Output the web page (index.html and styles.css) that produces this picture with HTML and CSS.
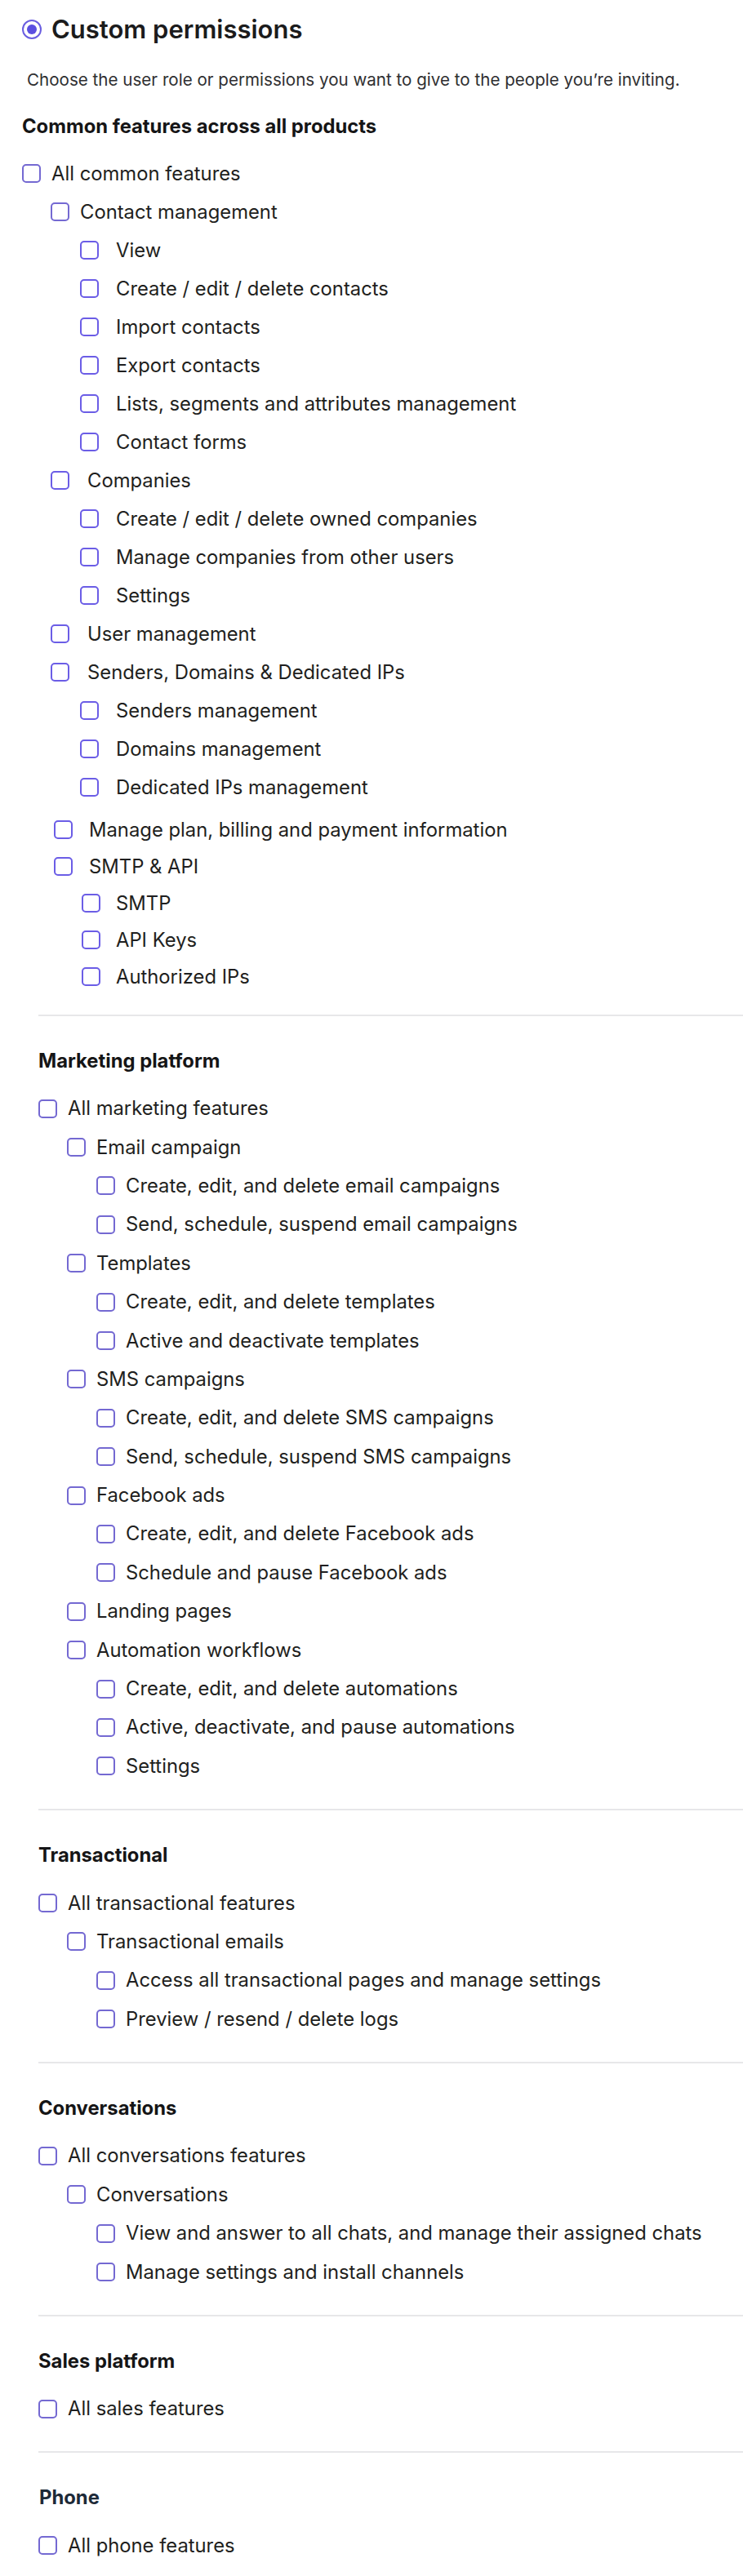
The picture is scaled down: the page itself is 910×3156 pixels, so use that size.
FILE: index.html
```html
<!DOCTYPE html>
<html lang="en">
<head>
<meta charset="utf-8">
<title>Custom permissions</title>
<link rel="stylesheet" href="styles.css">
</head>
<body>
<main class="page">
  <div class="title-row">
    <span class="radio"><span class="radio-dot"></span></span>
    <h1 class="title">Custom permissions</h1>
  </div>
  <p class="desc">Choose the user role or permissions you want to give to the people you’re inviting.</p>

  <section class="common">
    <h2 class="sec-title">Common features across all products</h2>
    <ul class="list">
      <li class="row"><span class="cb muted"></span><span class="lbl">All common features</span></li>
      <li class="row l1"><span class="cb muted"></span><span class="lbl">Contact management</span></li>
      <li class="row l2 wide"><span class="cb"></span><span class="lbl">View</span></li>
      <li class="row l2 wide"><span class="cb"></span><span class="lbl">Create / edit / delete contacts</span></li>
      <li class="row l2 wide"><span class="cb"></span><span class="lbl">Import contacts</span></li>
      <li class="row l2 wide"><span class="cb"></span><span class="lbl">Export contacts</span></li>
      <li class="row l2 wide"><span class="cb"></span><span class="lbl">Lists, segments and attributes management</span></li>
      <li class="row l2 wide"><span class="cb"></span><span class="lbl">Contact forms</span></li>
      <li class="row l1 wide"><span class="cb"></span><span class="lbl">Companies</span></li>
      <li class="row l2 wide"><span class="cb"></span><span class="lbl">Create / edit / delete owned companies</span></li>
      <li class="row l2 wide"><span class="cb"></span><span class="lbl">Manage companies from other users</span></li>
      <li class="row l2 wide"><span class="cb"></span><span class="lbl">Settings</span></li>
      <li class="row l1 wide"><span class="cb"></span><span class="lbl">User management</span></li>
      <li class="row l1 wide"><span class="cb"></span><span class="lbl">Senders, Domains &amp; Dedicated IPs</span></li>
      <li class="row l2 wide"><span class="cb"></span><span class="lbl">Senders management</span></li>
      <li class="row l2 wide"><span class="cb"></span><span class="lbl">Domains management</span></li>
      <li class="row l2 wide"><span class="cb"></span><span class="lbl">Dedicated IPs management</span></li>
    </ul>
    <ul class="list compact">
      <li class="row l1b"><span class="cb"></span><span class="lbl">Manage plan, billing and payment information</span></li>
      <li class="row l1b"><span class="cb"></span><span class="lbl">SMTP &amp; API</span></li>
      <li class="row l2b"><span class="cb"></span><span class="lbl">SMTP</span></li>
      <li class="row l2b"><span class="cb"></span><span class="lbl">API Keys</span></li>
      <li class="row l2b"><span class="cb"></span><span class="lbl">Authorized IPs</span></li>
    </ul>
  </section>

  <div class="products">
    <section class="product">
      <h2 class="sec-title">Marketing platform</h2>
      <ul class="list">
        <li class="row"><span class="cb muted"></span><span class="lbl">All marketing features</span></li>
        <li class="row l1"><span class="cb muted"></span><span class="lbl">Email campaign</span></li>
        <li class="row l2"><span class="cb muted"></span><span class="lbl">Create, edit, and delete email campaigns</span></li>
        <li class="row l2"><span class="cb muted"></span><span class="lbl">Send, schedule, suspend email campaigns</span></li>
        <li class="row l1"><span class="cb muted"></span><span class="lbl">Templates</span></li>
        <li class="row l2"><span class="cb muted"></span><span class="lbl">Create, edit, and delete templates</span></li>
        <li class="row l2"><span class="cb muted"></span><span class="lbl">Active and deactivate templates</span></li>
        <li class="row l1"><span class="cb muted"></span><span class="lbl">SMS campaigns</span></li>
        <li class="row l2"><span class="cb muted"></span><span class="lbl">Create, edit, and delete SMS campaigns</span></li>
        <li class="row l2"><span class="cb muted"></span><span class="lbl">Send, schedule, suspend SMS campaigns</span></li>
        <li class="row l1"><span class="cb muted"></span><span class="lbl">Facebook ads</span></li>
        <li class="row l2"><span class="cb muted"></span><span class="lbl">Create, edit, and delete Facebook ads</span></li>
        <li class="row l2"><span class="cb muted"></span><span class="lbl">Schedule and pause Facebook ads</span></li>
        <li class="row l1"><span class="cb muted"></span><span class="lbl">Landing pages</span></li>
        <li class="row l1"><span class="cb muted"></span><span class="lbl">Automation workflows</span></li>
        <li class="row l2"><span class="cb muted"></span><span class="lbl">Create, edit, and delete automations</span></li>
        <li class="row l2"><span class="cb muted"></span><span class="lbl">Active, deactivate, and pause automations</span></li>
        <li class="row l2"><span class="cb muted"></span><span class="lbl">Settings</span></li>
      </ul>
    </section>

    <section class="product">
      <h2 class="sec-title">Transactional</h2>
      <ul class="list">
        <li class="row"><span class="cb muted"></span><span class="lbl">All transactional features</span></li>
        <li class="row l1"><span class="cb muted"></span><span class="lbl">Transactional emails</span></li>
        <li class="row l2"><span class="cb muted"></span><span class="lbl">Access all transactional pages and manage settings</span></li>
        <li class="row l2"><span class="cb muted"></span><span class="lbl">Preview / resend / delete logs</span></li>
      </ul>
    </section>

    <section class="product">
      <h2 class="sec-title">Conversations</h2>
      <ul class="list">
        <li class="row"><span class="cb muted"></span><span class="lbl">All conversations features</span></li>
        <li class="row l1"><span class="cb muted"></span><span class="lbl">Conversations</span></li>
        <li class="row l2"><span class="cb muted"></span><span class="lbl">View and answer to all chats, and manage their assigned chats</span></li>
        <li class="row l2"><span class="cb muted"></span><span class="lbl">Manage settings and install channels</span></li>
      </ul>
    </section>

    <section class="product">
      <h2 class="sec-title">Sales platform</h2>
      <ul class="list">
        <li class="row"><span class="cb muted"></span><span class="lbl">All sales features</span></li>
      </ul>
    </section>

    <section class="product">
      <h2 class="sec-title phone">Phone</h2>
      <ul class="list">
        <li class="row"><span class="cb muted"></span><span class="lbl">All phone features</span></li>
      </ul>
    </section>
  </div>
</main>
</body>
</html>
```
FILE: styles.css
```css
* { box-sizing: border-box; }

html, body {
  margin: 0;
  padding: 0;
  background: #ffffff;
}

body {
  font-family: Inter, "Noto Sans", "Liberation Sans", sans-serif;
  color: #1f1f20;
}

.page {
  padding-left: 27px;
}

.title-row {
  display: flex;
  align-items: center;
  height: 71px;
  gap: 12px;
}

.radio {
  width: 24px;
  height: 24px;
  border-radius: 50%;
  border: 2px solid #6a5ee0;
  display: flex;
  align-items: center;
  justify-content: center;
  flex: none;
}

.radio-dot {
  width: 12px;
  height: 12px;
  border-radius: 50%;
  background: #5b4fe0;
}

.title {
  margin: 0;
  font-size: 31px;
  line-height: 36px;
  font-weight: 600;
  color: #1b1b1c;
  letter-spacing: 0;
}

.desc {
  margin: 13px 0 0 6px;
  font-size: 20.6px;
  line-height: 28px;
  color: #2f2f31;
  white-space: nowrap;
}

.sec-title {
  margin: 0;
  font-size: 23.8px;
  line-height: 24px;
  font-weight: 700;
  color: #151516;
}

.sec-title.phone {
  color: #1d2a38;
  padding-left: 1px;
}

.common .sec-title {
  margin-top: 30.5px;
}

.list {
  list-style: none;
  margin: 0;
  padding: 0;
}

.common .list {
  margin-top: 22.5px;
}

.common .list.compact {
  margin-top: 6px;
}

.row {
  display: flex;
  align-items: center;
  height: 47px;
  font-size: 23.8px;
  line-height: 28px;
  gap: 13px;
}

.compact .row {
  height: 45px;
}

.cb {
  width: 23px;
  height: 23px;
  flex: none;
  border: 2px solid #6b5de6;
  border-radius: 5px;
  background: #ffffff;
}

.cb.muted {
  border-color: #7469d2;
}

.lbl {
  white-space: nowrap;
}

.row.l1 { padding-left: 35px; }
.row.l2 { padding-left: 71px; }
.row.l1.wide { gap: 22px; }
.row.l2.wide { gap: 21px; }
.row.l1b { padding-left: 39px; gap: 20px; }
.row.l2b { padding-left: 73px; gap: 19px; }

.common {
  padding-bottom: 23.5px;
}

.products {
  margin-left: 20px;
}

.product {
  border-top: 2px solid #e7e7e9;
  padding-top: 43px;
  padding-bottom: 28.3px;
}

.product .list {
  margin-top: 23px;
}

.product .row {
  height: 47.4px;
}

.product .row.l1 { padding-left: 35px; }
.product .row.l2 { padding-left: 71px; }
```
